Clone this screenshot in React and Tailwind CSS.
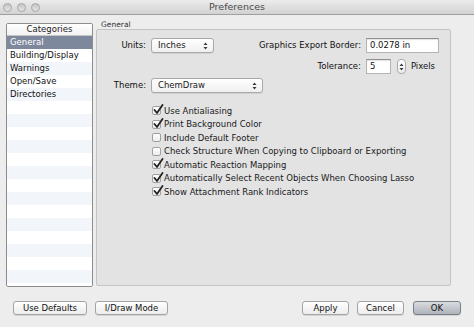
import React from 'react'

const font = { fontFamily: '"DejaVu Sans", "Lucida Grande", sans-serif' }

function UpDown({ className = '' }) {
  return (
    <svg width="5" height="8" viewBox="0 0 5 8" className={className}>
      <path d="M2.5 0.5L4.5 3H0.5z M2.5 7.5L4.5 5H0.5z" fill="#3a3a3a" />
    </svg>
  )
}

function Popup({ label, width }) {
  return (
    <div
      className={`flex items-center justify-between h-[15px] pl-[6px] pr-[5px] rounded-[3px] border border-[#a9a9a9] bg-gradient-to-b from-[#ffffff] to-[#f0f0f0] shadow-[0_1px_0_rgba(0,0,0,0.08)] ${width}`}
    >
      <span className="text-[#1a1a1a] leading-none">{label}</span>
      <UpDown />
    </div>
  )
}

function Field({ value, width }) {
  return (
    <div className={`h-[15px] flex items-center pl-[3px] bg-white border border-[#b4b4b4] border-t-[#8f8f8f] shadow-[inset_0_1px_1px_rgba(0,0,0,0.12)] ${width}`}>
      <span className="leading-none text-[#111]">{value}</span>
    </div>
  )
}

function Check({ checked, label }) {
  return (
    <div className="flex items-center h-[13.5px]">
      <div className="relative w-[9px] h-[9px] rounded-[2px] border border-[#a0a0a0] bg-gradient-to-b from-white to-[#ececec]">
        {checked && (
          <svg width="11" height="11" viewBox="0 0 11 11" className="absolute left-[-0.5px] top-[-3px]">
            <path d="M1.5 6L4 9L9.5 1" fill="none" stroke="#222" strokeWidth="1.8" strokeLinecap="round" strokeLinejoin="round" />
          </svg>
        )}
      </div>
      <span className="ml-[3px] text-[#1a1a1a] leading-none">{label}</span>
    </div>
  )
}

function Button({ children, width, primary }) {
  return (
    <div
      className={`h-[14px] flex items-center justify-center rounded-[3px] border ${width} ${
        primary
          ? 'border-[#7a7f88] bg-gradient-to-b from-[#d9dce1] to-[#aeb3ba]'
          : 'border-[#a4a4a4] bg-gradient-to-b from-white to-[#ececec]'
      } shadow-[0_1px_0_rgba(0,0,0,0.1)]`}
    >
      <span className="leading-none text-[#111]">{children}</span>
    </div>
  )
}

const categories = ['General', 'Building/Display', 'Warnings', 'Open/Save', 'Directories']

export default function App() {
  const rows = Array.from({ length: 20 }, (_, i) => categories[i] || '')
  const checks = [
    [true, 'Use Antialiasing'],
    [true, 'Print Background Color'],
    [false, 'Include Default Footer'],
    [false, 'Check Structure When Copying to Clipboard or Exporting'],
    [true, 'Automatic Reaction Mapping'],
    [true, 'Automatically Select Recent Objects When Choosing Lasso'],
    [true, 'Show Attachment Rank Indicators'],
  ]

  return (
    <div className="w-[474px] h-[327px] bg-[#ededed] flex flex-col text-[8.5px] overflow-hidden" style={font}>
      {/* Title bar */}
      <div className="relative h-[15px] flex items-center justify-center bg-gradient-to-b from-[#ececec] to-[#d2d2d2] border-b border-[#9f9f9f]">
        <div className="absolute left-[3px] top-[3px] flex gap-[5px]">
          <div className="w-[9px] h-[9px] rounded-full bg-gradient-to-b from-[#c4c4c4] to-[#e6e6e6] border border-[#a6a6a6]" />
          <div className="w-[9px] h-[9px] rounded-full bg-gradient-to-b from-[#c4c4c4] to-[#e6e6e6] border border-[#a6a6a6]" />
          <div className="w-[9px] h-[9px] rounded-full bg-gradient-to-b from-[#c4c4c4] to-[#e6e6e6] border border-[#a6a6a6]" />
        </div>
        <span className="text-[9.5px] text-[#4a4a4a] leading-none">Preferences</span>
      </div>

      <div className="flex pl-[6px] pt-[8px] gap-[3px]">
        {/* Categories list */}
        <div className="w-[87px] h-[264px] border border-[#8c8c8c] rounded-[2px] bg-white overflow-hidden flex flex-col">
          <div className="h-[12px] shrink-0 flex items-center justify-center border-b border-[#c6c6c6] bg-gradient-to-b from-white to-[#f2f2f2]">
            <span className="leading-none text-[#222]">Categories</span>
          </div>
          {rows.map((name, i) => (
            <div
              key={i}
              className={`h-[13px] shrink-0 flex items-center pl-[3px] ${
                i === 0 ? 'bg-[#7d889c] text-white' : i % 2 ? 'bg-white text-[#111]' : 'bg-[#f2f5fa] text-[#111]'
              }`}
            >
              <span className="leading-none">{name}</span>
            </div>
          ))}
        </div>

        {/* General group */}
        <div className="w-[355px] flex flex-col">
          <span className="pl-[5px] h-[6px] text-[7.5px] text-[#333] leading-none -mt-[2px]">General</span>
          <div className="mt-[2px] h-[257px] border border-[#c4c4c4] rounded-[2px] bg-[#e3e3e3] pt-[8px]">
            <div className="flex items-center">
              <span className="w-[49px] text-right text-[#111]">Units:</span>
              <div className="ml-[5px]">
                <Popup label="Inches" width="w-[63px]" />
              </div>
              <div className="flex-1 flex items-center justify-end pr-[11px]">
                <span className="text-[#111]">Graphics Export Border:</span>
                <div className="ml-[5px]">
                  <Field value="0.0278 in" width="w-[73px]" />
                </div>
              </div>
            </div>
            <div className="mt-[6px] flex items-center justify-end pr-[15px]">
              <span className="text-[#111]">Tolerance:</span>
              <div className="ml-[5px]">
                <Field value="5" width="w-[25px]" />
              </div>
              <div className="ml-[6px] w-[9px] h-[15px] rounded-[4px] border border-[#a9a9a9] bg-gradient-to-b from-white to-[#eeeeee] flex items-center justify-center">
                <UpDown />
              </div>
              <span className="ml-[5px] text-[#111]">Pixels</span>
            </div>
            <div className="mt-[4px] flex items-center">
              <span className="w-[49px] text-right text-[#111]">Theme:</span>
              <div className="ml-[5px]">
                <Popup label="ChemDraw" width="w-[112px]" />
              </div>
            </div>
            <div className="mt-[11px] pl-[55px] flex flex-col">
              {checks.map(([c, l]) => (
                <Check key={l} checked={c} label={l} />
              ))}
            </div>
          </div>
        </div>
      </div>

      {/* Bottom buttons */}
      <div className="flex items-center mt-[14px] pl-[13px] pr-[13px]">
        <Button width="w-[74px]">Use Defaults</Button>
        <div className="ml-[8px]">
          <Button width="w-[73px]">I/Draw Mode</Button>
        </div>
        <div className="flex-1" />
        <Button width="w-[47px]">Apply</Button>
        <div className="ml-[8px]">
          <Button width="w-[47px]">Cancel</Button>
        </div>
        <div className="ml-[9px]">
          <Button width="w-[48px]" primary>OK</Button>
        </div>
      </div>
    </div>
  )
}
